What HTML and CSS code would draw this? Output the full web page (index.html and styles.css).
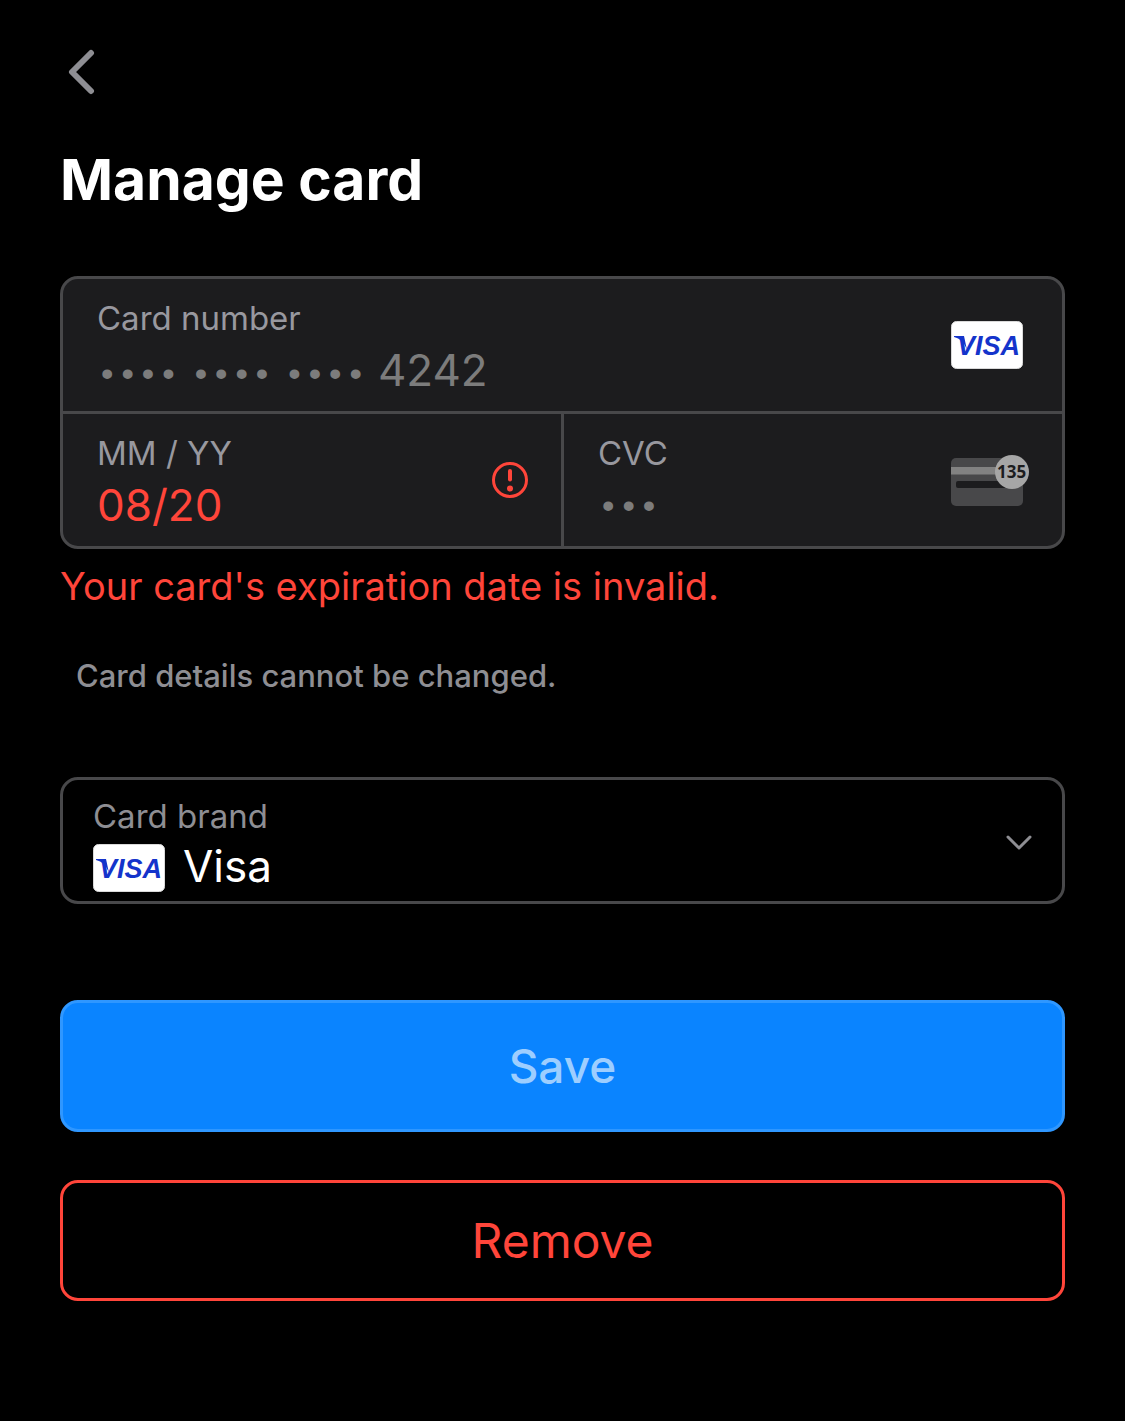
FILE: index.html
```html
<!DOCTYPE html>
<html lang="en">
<head>
<meta charset="utf-8">
<meta name="viewport" content="width=device-width, initial-scale=1">
<title>Manage card</title>
<link rel="stylesheet" href="styles.css">
</head>
<body>
<main class="page">
  <button class="back" type="button" aria-label="Back">
    <svg width="28" height="46" viewBox="0 0 28 46"><path d="M24 4 5 23 24 42" fill="none" stroke="#8e8e93" stroke-width="6" stroke-linecap="round" stroke-linejoin="round"/></svg>
  </button>
  <h1 class="title">Manage card</h1>
  <form class="form">
    <div class="card">
      <div class="field field-wide">
        <div class="field-text">
          <label class="label" for="number">Card number</label>
          <div class="number">
            <span class="dots">••••</span>
            <span class="dots">••••</span>
            <span class="dots">••••</span>
            <input class="value" id="number" value="4242" readonly>
          </div>
        </div>
        <svg class="brand-icon" viewBox="0 0 72 48" role="img" aria-label="Visa">
          <rect x="0.5" y="0.5" width="71" height="47" rx="5" fill="#fff" stroke="#d9d9d9"/>
          <path d="M3 15H13L16 29C13 21 9 17.500 3 16Z" fill="#1434cb"/>
          <text class="visa-word" x="6" y="34">VISA</text>
        </svg>
      </div>
      <div class="field">
        <div class="field-text">
          <label class="label" for="expiry">MM / YY</label>
          <input class="value value-error" id="expiry" value="08/20" readonly aria-invalid="true" aria-describedby="error">
        </div>
        <svg class="alert" viewBox="0 0 36 36" aria-hidden="true"><circle cx="18" cy="18" r="16.500" fill="none" stroke="#ff453a" stroke-width="3"/><path d="M18 9V17.500" stroke="#ff453a" stroke-width="4" stroke-linecap="round"/><circle cx="18" cy="26.500" r="3" fill="#ff453a"/></svg>
      </div>
      <div class="field">
        <div class="field-text">
          <label class="label" for="cvc">CVC</label>
          <input class="value dots" id="cvc" value="•••" readonly>
        </div>
        <svg class="cvc-icon" viewBox="0 0 78 51" aria-hidden="true">
          <rect y="3" width="72" height="48" rx="5" fill="#48484a"/>
          <path d="M0 12H72V19.500H0Z" fill="#828282"/>
          <rect x="5" y="26" width="58" height="7" rx="2" fill="#1c1c1e"/>
          <circle cx="61" cy="17" r="17" fill="#a6a6a6"/>
          <text class="cvc-digits" x="46" y="23">135</text>
        </svg>
      </div>
    </div>
    <p class="error" id="error">Your card's expiration date is invalid.</p>
    <p class="hint">Card details cannot be changed.</p>
    <div class="brand">
      <div class="brand-text">
        <label class="label label-dim" for="brand">Card brand</label>
        <div class="brand-row">
          <svg class="brand-icon" viewBox="0 0 72 48" aria-hidden="true">
            <rect x="0.5" y="0.5" width="71" height="47" rx="5" fill="#fff" stroke="#d9d9d9"/>
            <path d="M3 15H13L16 29C13 21 9 17.500 3 16Z" fill="#1434cb"/>
            <text class="visa-word" x="6" y="34">VISA</text>
          </svg>
          <select class="select" id="brand"><option>Visa</option></select>
        </div>
      </div>
      <svg class="chevron" viewBox="0 0 26 16" aria-hidden="true"><path d="M2 2 13 13 24 2" fill="none" stroke="#8e8e93" stroke-width="3" stroke-linecap="round" stroke-linejoin="round"/></svg>
    </div>
    <button class="button save" type="button">Save</button>
    <button class="button remove" type="button">Remove</button>
  </form>
</main>
</body>
</html>
```
FILE: styles.css
```css
* { box-sizing: border-box; }

body {
  margin: 0;
  background: #000;
  color: #fff;
  font-family: Inter, "Liberation Sans", sans-serif;
}

.page { padding: 49px 60px; }

.back {
  display: block;
  padding: 0 7px;
  border: 0;
  background: none;
}
.back svg { display: block; }

.title {
  margin: 49px 0 60px;
  font-size: 57px;
  line-height: 72px;
  font-weight: 700;
}

.form { display: flex; flex-direction: column; }

.card {
  display: grid;
  grid-template-columns: 1fr 1fr;
  gap: 3px;
  overflow: hidden;
  border: 3px solid #48484a;
  border-radius: 18px;
  background: #48484a;
}

.field {
  display: flex;
  align-items: center;
  padding: 0 33px 0 34px;
  background: #1c1c1e;
}
.field-wide {
  grid-column: 1 / -1;
  padding-right: 39px;
}

.field-text {
  flex: 1;
  min-width: 0;
  padding: 19px 0 13px;
}

.label {
  display: block;
  color: #98989f;
  font-size: 33px;
  line-height: 40px;
}
.label-dim { color: #8e8e93; }

.number { display: flex; gap: 12px; }

.value,
.dots {
  display: block;
  height: 56px;
  margin-top: 4px;
  color: #7c7c7c;
  font: 400 44px/56px Inter, "Liberation Sans", sans-serif;
}
.value {
  width: 100%;
  padding: 0;
  border: 0;
  outline: 0;
  background: none;
}
.dots {
  padding-top: 6px;
  font: 700 34px/50px "Liberation Mono", monospace;
}
.number .dots { line-height: 56px; }
.value-error { color: #ff453a; }

.brand-icon { flex: none; width: 72px; height: 48px; }
.visa-word {
  font: italic 700 27px "Liberation Sans", sans-serif;
  fill: #1434cb;
}
.alert { flex: none; width: 36px; height: 36px; }
.cvc-icon { flex: none; width: 78px; height: 51px; }
.cvc-digits {
  font: 700 17px "Liberation Sans Narrow", "Open Sans", sans-serif;
  fill: #1c1c1e;
}

.error {
  margin: 13px 0 0;
  color: #ff453a;
  font-size: 38px;
  line-height: 48px;
}

.hint {
  margin: 46px 16px 0;
  color: #8e8e93;
  font-size: 31px;
  line-height: 40px;
  font-weight: 500;
}

.brand {
  display: flex;
  align-items: center;
  margin-top: 81px;
  padding: 4px 30px 0;
  border: 3px solid #48484a;
  border-radius: 18px;
}
.brand-text {
  flex: 1;
  min-width: 0;
  padding: 12px 0 9px;
}
.brand-row {
  display: flex;
  align-items: flex-start;
  gap: 18px;
  margin-top: 8px;
}

.select {
  flex: 1;
  height: 44px;
  padding: 0;
  border: 0;
  outline: 0;
  appearance: none;
  background: none;
  color: #fff;
  font: 400 44px/44px Inter, "Liberation Sans", sans-serif;
}

.chevron { flex: none; width: 26px; height: 16px; }

.button {
  border: 3px solid;
  border-radius: 18px;
  font-family: inherit;
  line-height: 60px;
}
.save {
  margin-top: 96px;
  padding: 33px;
  border-color: #2f97ff;
  background: #0a84ff;
  color: #9dceff;
  font-size: 46px;
  font-weight: 500;
}
.remove {
  margin-top: 48px;
  padding: 28px 27px 27px;
  border-color: #ff453a;
  background: none;
  color: #ff453a;
  font-size: 48px;
}
```
